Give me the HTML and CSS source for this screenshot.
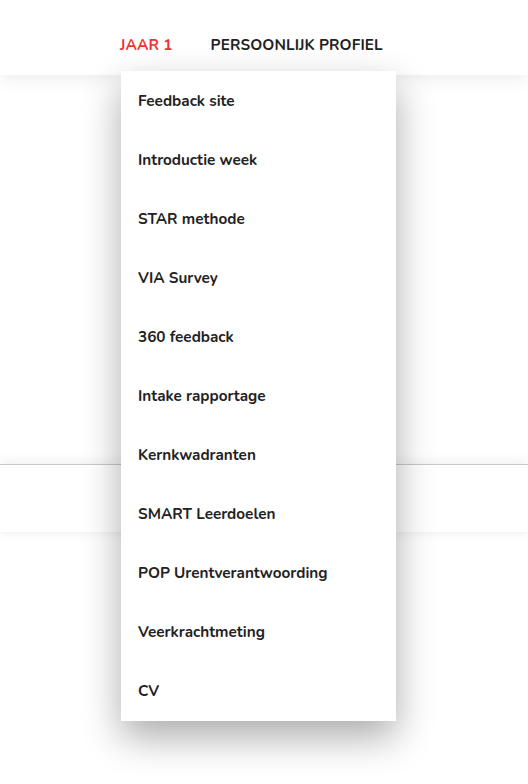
FILE: index.html
```html
<!DOCTYPE html>
<html lang="nl">
<head>
<meta charset="utf-8">
<title>Jaar 1</title>
<link rel="stylesheet" href="styles.css">
</head>
<body>
<header class="topbar">
  <nav class="nav">
    <div class="nav-item has-menu">
      <a class="nav-link active" href="#">JAAR 1</a>
      <ul class="dropdown">
        <li><a href="#">Feedback site</a></li>
        <li><a href="#">Introductie week</a></li>
        <li><a href="#">STAR methode</a></li>
        <li><a href="#">VIA Survey</a></li>
        <li><a href="#">360 feedback</a></li>
        <li><a href="#">Intake rapportage</a></li>
        <li><a href="#">Kernkwadranten</a></li>
        <li><a href="#">SMART Leerdoelen</a></li>
        <li><a href="#">POP Urentverantwoording</a></li>
        <li><a href="#">Veerkrachtmeting</a></li>
        <li><a href="#">CV</a></li>
      </ul>
    </div>
    <div class="nav-item">
      <a class="nav-link" href="#">PERSOONLIJK PROFIEL</a>
    </div>
  </nav>
</header>
<main class="content">
  <section class="band"></section>
</main>
</body>
</html>
```
FILE: styles.css
```css
* { box-sizing: border-box; }
html, body { margin: 0; padding: 0; background: #fff; }
body {
  font-family: "Nunito", "Lato", "Open Sans", sans-serif;
  color: #222;
  width: 528px;
  height: 784px;
  overflow: hidden;
}
.topbar {
  position: relative;
  z-index: 5;
  height: 75px;
  background: #fff;
  box-shadow: 0 2px 18px rgba(0, 0, 0, 0.09);
}
.nav {
  display: flex;
  gap: 38px;
  padding-left: 120px;
  height: 100%;
  align-items: flex-start;
}
.nav-item { position: relative; }
.nav-link {
  display: block;
  padding-top: 36px;
  font-size: 15.3px;
  font-weight: 700;
  letter-spacing: 0.1px;
  color: #222;
  text-decoration: none;
  line-height: 18px;
}
.nav-link.active { color: #ec3338; }
.dropdown {
  position: absolute;
  top: 71px;
  left: 1px;
  width: 275px;
  margin: 0;
  padding: 0;
  list-style: none;
  background: #fff;
  box-shadow: 0 16px 36px rgba(0, 0, 0, 0.33);
}
.dropdown li { height: 59.1px; display: flex; align-items: center; }
.dropdown a {
  padding-left: 17px;
  font-size: 15.3px;
  font-weight: 700;
  color: #222;
  text-decoration: none;
}
.content { padding-top: 389px; }
.band {
  height: 68px;
  border-top: 1px solid #c9c9c9;
  background: #fff;
  box-shadow: 0 -4px 10px rgba(0, 0, 0, 0.05), 0 4px 8px rgba(0, 0, 0, 0.04);
}
```
